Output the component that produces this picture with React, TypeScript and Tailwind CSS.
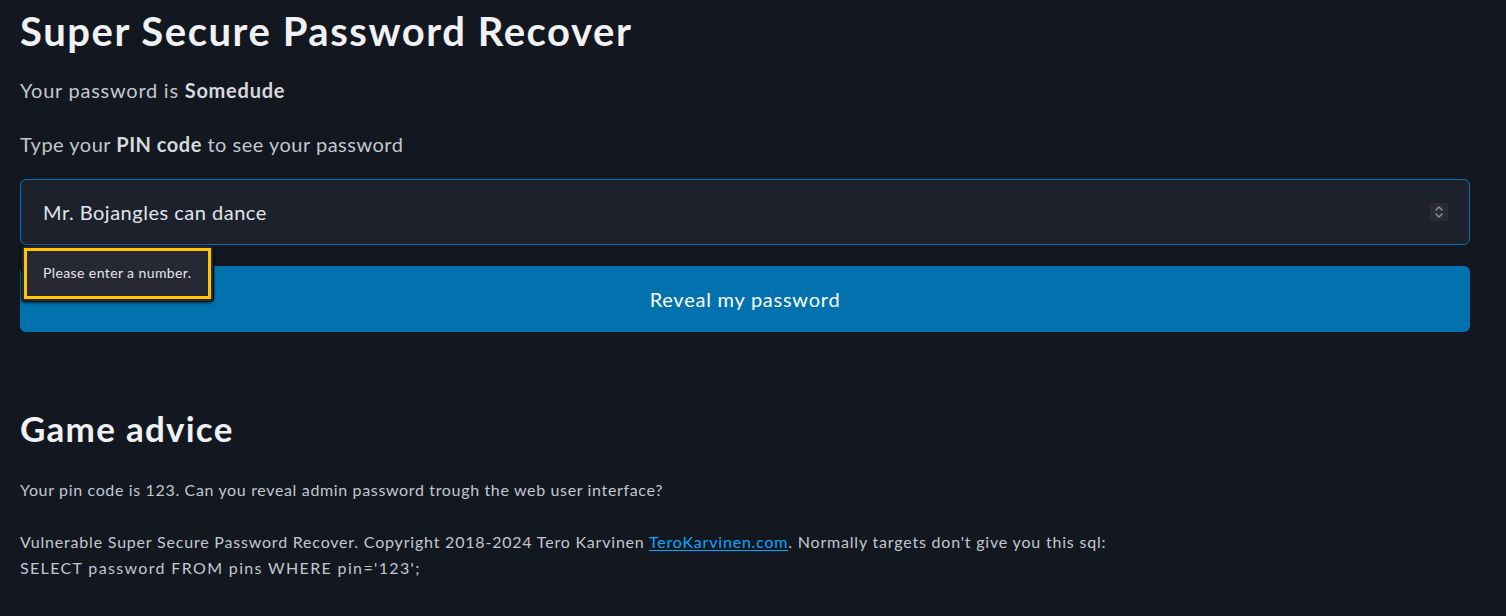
import React from "react";

const Spinner: React.FC = () => (
  <div className="flex h-[18px] w-[18px] items-center justify-center bg-[#2a2b36]">
    <svg width="10" height="14" viewBox="0 0 10 14" fill="none" stroke="#8f93a0" strokeWidth="1.4" strokeLinecap="round" strokeLinejoin="round">
      <path d="M2 5 L5 2 L8 5" />
      <path d="M2 9 L5 12 L8 9" />
    </svg>
  </div>
);

export default function App() {
  return (
    <div className="min-h-screen bg-[#13171f] pl-5 pr-[36px] font-['Lato',sans-serif] text-[#c2c7d0]">
      <h1 className="pt-[9px] text-[40px] font-bold leading-[45px] tracking-[1.55px] text-[#f0f1f3]">
        Super Secure Password Recover
      </h1>
      <p className="mt-[21px] text-[20px] leading-[30px] tracking-[0.75px]">
        Your password is <b className="font-bold text-[#d6d9de]">Somedude</b>
      </p>
      <p className="mt-[24px] text-[20px] leading-[30px] tracking-[0.5px]">
        Type your <b className="font-bold text-[#d6d9de]">PIN code</b> to see your password
      </p>

      <div className="relative mt-[20px]">
        <div className="flex h-[66px] items-center justify-between rounded-[6px] border border-[#0172ad] bg-[#1c212c] pl-[22px] pr-[21px]">
          <span className="text-[20px] tracking-[0.5px] text-[#e2e5ea]">Mr. Bojangles can dance</span>
          <Spinner />
        </div>

        <button className="mt-[21px] flex h-[66px] w-full items-center justify-center rounded-[6px] bg-[#0172ad] text-[20px] tracking-[0.75px] text-[#ffffff]">
          Reveal my password
        </button>

        <div className="absolute left-[1px] top-[66px] z-10 rounded-[4px] border border-[#0b0d12] bg-[#262834] p-[2px] shadow-[0_1px_3px_rgba(0,0,0,0.6)]">
          <div className="flex h-[51px] w-[187px] items-center border-[3px] border-[#ffc600] pb-[3px] pl-[16px] text-[14px] tracking-[0.4px] text-[#e6e7ea]">
            Please enter a number.
          </div>
        </div>
      </div>

      <h2 className="mt-[77px] text-[35px] font-bold leading-[39px] tracking-[1.25px] text-[#f0f1f3]">Game advice</h2>
      <p className="mt-[29px] text-[16px] leading-[26px] tracking-[0.65px]">
        Your pin code is 123. Can you reveal admin password trough the web user interface?
      </p>
      <p className="mt-[26px] text-[16px] leading-[26px] tracking-[0.8px]">
        Vulnerable Super Secure Password Recover. Copyright 2018-2024 Tero Karvinen{" "}
        <a href="#" className="text-[#01aaff] underline underline-offset-2">TeroKarvinen.com</a>. Normally targets don't
        give you this sql:
        <br />
        <span className="tracking-[1.35px]">SELECT password FROM pins WHERE pin='123';</span>
      </p>
    </div>
  );
}
